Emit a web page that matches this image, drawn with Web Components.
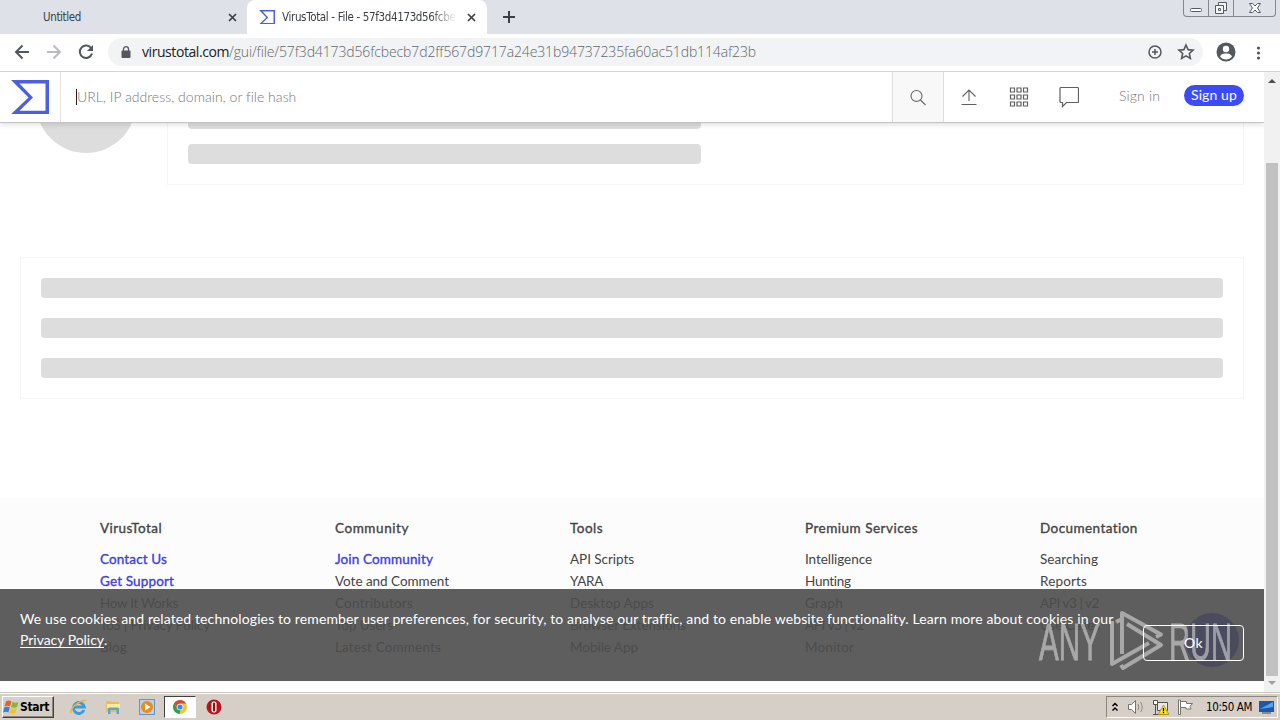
<!DOCTYPE html>
<html lang="en">
<head>
<meta charset="utf-8">
<title>VirusTotal</title>
<style>
  body {
    margin: 0;
    overflow: hidden;
  }
</style>
</head>
<body>
<desktop-screen></desktop-screen>
<script>
const attach = ( host, html ) => {
  const template = document.createElement( 'template' );
  template.innerHTML = html;

  const shadowRoot = host.attachShadow( {mode: 'open'} );
  shadowRoot.appendChild( template.content.cloneNode( true ) );
  return shadowRoot;
};

// Single line label, tracked so that it fills the given width
class FitText extends HTMLElement {
  constructor() {
    super();
    attach( this, `
      <style>
        :host {
          display: inline-block;
          flex: none;
          white-space: nowrap;
        }
      </style>
      <slot></slot>
    ` );
  }

  connectedCallback() {
    const width = parseFloat( this.getAttribute( 'width' ) );
    const count = this.textContent.length;

    // Measured as max-content, a stretched box would report its parent's width
    this.style.width = 'max-content';
    const natural = this.getBoundingClientRect().width;

    if( width && natural ) {
      this.style.letterSpacing = `${( width - natural ) / count}px`;
    }
  }
}

class BrowserTab extends HTMLElement {
  constructor() {
    super();
    attach( this, `
      <style>
        :host {
          align-items: center;
          box-sizing: border-box;
          color: #3c4043;
          display: flex;
          font: 11.500px/14px 'DejaVu Sans Condensed', 'DejaVu Sans', sans-serif;
          height: 34px;
          padding: 0 10px 0 12px;
          width: 247px;
        }

        :host( [active] ) {
          background: #ffffff;
          border-radius: 8px 8px 0 0;
          width: 240px;
        }

        span {
          flex: 1;
          margin-left: 31px;
          overflow: hidden;
          white-space: nowrap;
        }

        :host( [active] ) span {
          flex: none;
          margin: 0 10px 0 7px;
          width: 175px;
          -webkit-mask-image: linear-gradient( to right, #000 85%, transparent );
        }

        svg {
          display: block;
        }
      </style>
      <slot name="icon"></slot>
      <span><slot></slot></span>
      <svg width="9" height="9" viewBox="0 0 9 9"><path d="M1 1l7 7M8 1l-7 7" stroke="#3c4043" stroke-width="1.700"/></svg>
    ` );
  }
}

class WindowControls extends HTMLElement {
  constructor() {
    super();
    attach( this, `
      <style>
        :host {
          align-self: flex-start;
          border: 1px solid #83878f;
          border-radius: 0 0 4px 4px;
          border-top: 0;
          box-sizing: border-box;
          display: flex;
          height: 17px;
          margin-left: auto;
          margin-right: 4px;
          width: 93px;
        }

        div {
          border-right: 1px solid #83878f;
          display: flex;
          justify-content: center;
          width: 24px;
        }

        div:last-child {
          border: 0;
          flex: 1;
        }
      </style>
      <div><svg width="24" height="16"><rect x="6.500" y="8.500" width="11" height="3" rx="1" fill="#fff" stroke="#555a63"/></svg></div>
      <div><svg width="24" height="16" fill="#f4f5f7" stroke="#555a63"><path d="M9.500 2.500h8v8h-8z"/><path d="M6.500 5.500h8v8h-8z"/><path d="M9.500 8.500h2v2h-2z"/></svg></div>
      <div><svg width="24" height="16"><path d="M6.500 3.500h3l2.500 2.500 2.500-2.500h3l-3 4.500 3 4.500h-3l-2.500-2.500-2.500 2.500h-3l3-4.500z" fill="#fff" stroke="#555a63"/></svg></div>
    ` );
  }
}

class TabStrip extends HTMLElement {
  constructor() {
    super();
    attach( this, `
      <style>
        :host {
          background: #dee1e8;
          display: flex;
          height: 34px;
        }

        .plus {
          align-self: center;
          margin-left: 16px;
        }
      </style>
      <browser-tab><fit-text width="38">Untitled</fit-text></browser-tab>
      <browser-tab active>
        <vt-logo slot="icon" style="--size: 16px"></vt-logo>
        <fit-text width="185">VirusTotal - File - 57f3d4173d56fcbecb</fit-text>
      </browser-tab>
      <svg class="plus" width="12" height="12"><path d="M6 0v12M0 6h12" stroke="#3c4043" stroke-width="2"/></svg>
      <window-controls></window-controls>
    ` );
  }
}

class VtLogo extends HTMLElement {
  constructor() {
    super();
    attach( this, `
      <style>
        :host {
          display: block;
          height: calc( var( --size ) * .9 );
          width: var( --size );
        }

        svg {
          display: block;
          height: 100%;
          width: 100%;
        }
      </style>
      <svg viewBox="0 0 38 34" preserveAspectRatio="none"><path fill="#4b5fe6" fill-rule="evenodd" d="M0 0H38V34H0L17.500 17.500zM8.500 3.500L22 17.500L8.500 30.500H34.500V3.500z"/></svg>
    ` );
  }
}

class AddressBar extends HTMLElement {
  constructor() {
    super();
    attach( this, `
      <style>
        :host {
          align-items: center;
          background: #ffffff;
          border-bottom: 1px solid #d4d5d7;
          box-sizing: border-box;
          display: flex;
          height: 38px;
          padding: 0 12px 0 14px;
        }

        svg {
          display: block;
          flex: none;
        }

        .nav {
          display: flex;
          gap: 16px;
          margin-top: -2px;
        }

        .field {
          align-items: center;
          background: #f1f3f4;
          border-radius: 14px;
          box-sizing: border-box;
          color: #63676b;
          display: flex;
          font: 300 14px/20px 'Open Sans', sans-serif;
          height: 28px;
          margin-left: 14px;
          margin-top: -1px;
          padding: 0 10px 0 13px;
          width: 1095px;
        }

        .field b {
          color: #202124;
          font-weight: 400;
        }

        .lock {
          margin-right: 11px;
        }

        .zoom {
          margin: 0 16px 0 auto;
        }

        .user {
          margin: -2px 0 0 13px;
        }

        .more {
          margin-left: auto;
        }
      </style>
      <div class="nav">
        <svg width="16" height="16" fill="none" stroke="#54585c" stroke-width="2"><path d="M15 8H2M8.500 1.500L2 8l6.500 6.500"/></svg>
        <svg width="16" height="16" fill="none" stroke="#b9bbbe" stroke-width="2"><path d="M1 8h13M7.500 1.500L14 8l-6.500 6.500"/></svg>
        <svg width="16" height="16" fill="none" stroke="#54585c" stroke-width="2"><path d="M13.300 4.500A6.200 6.200 0 1 0 14 9.500"/><path d="M15 1v6H9z" fill="#54585c" stroke="none"/></svg>
      </div>
      <div class="field">
        <svg class="lock" width="10" height="12"><rect x="0.500" y="4.500" width="9" height="7.500" rx="1" fill="#54585c"/><path d="M2.500 5V3.200a2.500 2.500 0 0 1 5 0V5" fill="none" stroke="#54585c" stroke-width="1.300"/></svg>
        <b><fit-text width="87">virustotal.com</fit-text></b><fit-text width="527">/gui/file/57f3d4173d56fcbecb7d2ff567d9717a24e31b94737235fa60ac51db114af23b</fit-text>
        <svg class="zoom" width="14" height="14" fill="none" stroke="#54585c" stroke-width="1.500"><circle cx="7" cy="7" r="6"/><path d="M7 4v6M4 7h6"/></svg>
        <svg width="18" height="18" viewBox="0 0 16 16" style="margin: 0 -2px 0 -1px" fill="none" stroke="#54585c" stroke-width="1.400"><path d="M8 1.800l1.850 4.100 4.450.45-3.350 3 .95 4.400L8 11.500l-3.900 2.250.95-4.400-3.350-3 4.450-.45z"/></svg>
      </div>
      <svg class="user" width="20" height="20"><circle cx="10" cy="10" r="9.500" fill="#54585c"/><circle cx="10" cy="7" r="3.200" fill="#fff"/><path d="M4 14.500c1-2.500 3.500-3 6-3s5 .5 6 3a7.500 7.500 0 0 1-12 0z" fill="#fff"/></svg>
      <svg class="more" width="20" height="16" fill="#54585c"><circle cx="10.500" cy="3" r="1.600"/><circle cx="10.500" cy="8" r="1.600"/><circle cx="10.500" cy="13" r="1.600"/></svg>
    ` );
  }
}

class VtHeader extends HTMLElement {
  constructor() {
    super();
    attach( this, `
      <style>
        :host {
          background: #ffffff;
          border-bottom: 1px solid #c4c4c4;
          box-shadow: 0 2px 5px rgba( 0, 0, 0, .12 );
          color: #777777;
          display: flex;
          font: 300 14px/20px Lato, sans-serif;
          height: 50px;
        }

        .logo {
          border-right: 1px solid #e4e4dc;
          box-sizing: border-box;
          padding: 8px 11px;
          width: 61px;
        }

        .query {
          align-items: center;
          display: flex;
          flex: 1;
          padding-left: 15px;
        }

        .caret {
          background: #222222;
          height: 16px;
          width: 1px;
        }

        .search {
          align-items: center;
          background: #f8f8f8;
          border: solid #dedede;
          border-width: 0 1px;
          box-sizing: border-box;
          display: flex;
          justify-content: center;
          width: 52px;
        }

        .actions {
          align-items: center;
          display: flex;
          width: 320px;
        }

        .actions svg {
          flex: none;
          margin-left: 15px;
          margin-right: 15px;
        }

        .signin {
          margin: -3px 24px 0 25px;
        }

        .signup {
          background: #3b4bfa;
          border-radius: 11px;
          box-sizing: border-box;
          color: #ffffff;
          font-weight: 400;
          height: 21px;
          margin-top: -3px;
          padding-left: 7px;
          width: 60px;
        }
      </style>
      <div class="logo"><vt-logo style="--size: 38px"></vt-logo></div>
      <div class="query"><div class="caret"></div><fit-text width="219">URL, IP address, domain, or file hash</fit-text></div>
      <div class="search"><svg width="18" height="18" fill="none" stroke="#666" stroke-width="1.100"><circle cx="7.500" cy="8" r="5.500"/><path d="M11.500 12l5 5"/></svg></div>
      <div class="actions">
        <svg width="20" height="20" fill="none" stroke="#606060" stroke-width="1.100"><path d="M10 14V3.500M3.500 9.500L10 3l6.500 6.500M2.500 17.500h15"/></svg>
        <svg width="20" height="20" fill="none" stroke="#606060" stroke-width="1.200"><path d="M1.500 1h4v4h-4zM8 1h4v4h-4zM14.500 1h4v4h-4zM1.500 8h4v4h-4zM8 8h4v4h-4zM14.500 8h4v4h-4zM1.500 15h4v4h-4zM8 15h4v4h-4zM14.500 15h4v4h-4z"/></svg>
        <svg width="20" height="22" fill="none" stroke="#606060" stroke-width="1.200"><path d="M2 1.500h16.500a1 1 0 0 1 1 1v13a1 1 0 0 1-1 1H7.500L3.500 20.500V16.500H2a1 1 0 0 1-1-1V2.500a1 1 0 0 1 1-1z"/></svg>
        <fit-text class="signin" width="41">Sign in</fit-text>
        <div class="signup"><fit-text width="46">Sign up</fit-text></div>
      </div>
    ` );
  }
}

class SkeletonCard extends HTMLElement {
  constructor() {
    super();
    const root = attach( this, `
      <style>
        :host {
          border: 1px solid #f5f5f5;
          box-sizing: border-box;
          display: flex;
          flex-direction: column;
          gap: 20px;
          padding: 20px;
        }

        div {
          background: #dddddd;
          border-radius: 4px;
          height: 20px;
        }
      </style>
    ` );

    for( let r = 0; r < parseInt( this.getAttribute( 'rows' ) ); r++ ) {
      root.appendChild( document.createElement( 'div' ) );
    }
  }
}

class LinkColumn extends HTMLElement {
  constructor() {
    super();
    attach( this, `
      <style>
        :host {
          align-items: flex-start;
          color: #444444;
          display: flex;
          flex: none;
          flex-direction: column;
          font: 13.500px/22px Lato, sans-serif;
          width: 235px;
        }

        div {
          -webkit-text-stroke: .35px #444444;
          margin-bottom: 9px;
        }
      </style>
      <div><slot name="title"></slot></div>
      <slot></slot>
    ` );
  }
}

class VtFooter extends HTMLElement {
  constructor() {
    super();

    // [label, width in pixels], the column title comes first
    this._columns = [
      [['VirusTotal', 62], ['Contact Us', 67], ['Get Support', 74], ['How It Works', 78], ['ToS | Privacy Policy', 110], ['Blog', 27]],
      [['Community', 74], ['Join Community', 98], ['Vote and Comment', 114], ['Contributors', 78], ['Top Users', 58], ['Latest Comments', 106]],
      [['Tools', 33], ['API Scripts', 64], ['YARA', 33], ['Desktop Apps', 84], ['Browser Extensions', 116], ['Mobile App', 68]],
      [['Premium Services', 113], ['Intelligence', 67], ['Hunting', 46], ['Graph', 38], ['API v3 | v2', 59], ['Monitor', 49]],
      [['Documentation', 98], ['Searching', 58], ['Reports', 47], ['API v3 | v2', 59], ['Use Cases', 60]]
    ];

    const columns = this._columns.map( ( column, c ) => `
      <link-column>${column.map( ( item, i ) => {
        const lead = ( c === 0 && ( i === 1 || i === 2 ) ) || ( c === 1 && i === 1 );
        return `<fit-text width="${item[1]}"${i === 0 ? ' slot="title"' : ''}${lead ? ' class="lead"' : ''}>${item[0]}</fit-text>`;
      } ).join( '' )}</link-column>` ).join( '' );

    attach( this, `
      <style>
        :host {
          background: #fcfcfc;
          box-sizing: border-box;
          display: flex;
          height: 184px;
          overflow: hidden;
          padding: 19px 0 0 100px;
        }

        .lead {
          -webkit-text-stroke: .35px #3b40e8;
          color: #3b40e8;
        }
      </style>
      ${columns}
    ` );
  }
}

class CookieBar extends HTMLElement {
  constructor() {
    super();
    attach( this, `
      <style>
        :host {
          align-items: center;
          background: rgba( 76, 76, 76, .9 );
          box-sizing: border-box;
          color: #ffffff;
          display: flex;
          font: 14px/21px Lato, sans-serif;
          height: 92px;
          justify-content: space-between;
          padding: 0 20px;
        }

        p {
          display: flex;
          flex-direction: column;
          margin: -12px 0 0;
        }

        .policy {
          text-decoration: underline;
          text-underline-offset: 2px;
        }

        .ok {
          align-items: center;
          border: 1px solid #ffffff;
          border-radius: 4px;
          box-sizing: border-box;
          display: flex;
          height: 36px;
          justify-content: center;
          margin-top: 16px;
          padding-bottom: 2px;
          width: 101px;
        }
      </style>
      <p>
        <fit-text width="1093">We use cookies and related technologies to remember user preferences, for security, to analyse our traffic, and to enable website functionality. Learn more about cookies in our</fit-text>
        <span><fit-text class="policy" width="84">Privacy Policy</fit-text>.</span>
      </p>
      <div class="ok"><fit-text width="19">Ok</fit-text></div>
    ` );
  }
}

class AnyRunMark extends HTMLElement {
  constructor() {
    super();
    attach( this, `
      <style>
        :host {
          display: block;
          height: 64px;
          opacity: .46;
          width: 200px;
        }

        text {
          fill: #ffffff;
          font: 400 52px 'Liberation Sans Narrow', 'Liberation Sans', sans-serif;
          stroke: #ffffff;
          stroke-width: .8px;
        }
      </style>
      <svg width="200" height="64">
        <text x="2" y="51.500" textLength="61" lengthAdjust="spacingAndGlyphs">ANY</text>
        <text x="132" y="51.500" textLength="63" lengthAdjust="spacingAndGlyphs">RUN</text>
        <path d="M75 13V56L112 35M79 14L85 11M85 46V5L124 26.500L119 29M90 16L124 37L86 60L84 57" fill="none" stroke="#fff" stroke-width="4" stroke-linejoin="round"/>
      </svg>
    ` );
  }
}

class PageScrollbar extends HTMLElement {
  constructor() {
    super();
    attach( this, `
      <style>
        :host {
          align-items: center;
          background: #f1f1f1;
          display: flex;
          flex-direction: column;
          justify-content: space-between;
          width: 16px;
        }

        svg {
          display: block;
        }

        div {
          background: #c1c1c1;
          height: 513px;
          margin-top: 74px;
          width: 12px;
        }
      </style>
      <svg width="16" height="17"><path d="M4 11l4-4 4 4z" fill="#505050"/></svg>
      <div></div>
      <svg width="16" height="16"><path d="M4 5h8l-4 4z" fill="#a0a0a0"/></svg>
    ` );
  }
}

class VtPage extends HTMLElement {
  constructor() {
    super();
    attach( this, `
      <style>
        :host {
          background: #ffffff;
          display: flex;
          flex: 1;
          overflow: hidden;
        }

        .view {
          flex: 1;
          overflow: hidden;
          position: relative;
        }

        .content {
          display: flex;
          flex-direction: column;
          margin-top: -20px;
        }

        .summary {
          display: flex;
          height: 133px;
          margin: 0 20px 72px 36px;
        }

        .score {
          background: #dddddd;
          border-radius: 50%;
          height: 100px;
          margin: 1px 31px 0 0;
          width: 100px;
        }

        .summary skeleton-card {
          flex: 1;
          gap: 15px;
          justify-content: flex-end;
          padding-right: 542px;
        }

        .details {
          height: 142px;
          margin: 0 20px 99px;
        }

        vt-header,
        .chat,
        cookie-bar,
        any-run-mark {
          left: 0;
          position: absolute;
          right: 0;
          top: 0;
        }

        .chat {
          background: #3b4bfa;
          border-radius: 50%;
          height: 54px;
          left: 1185px;
          top: 541px;
          width: 54px;
        }

        cookie-bar {
          top: 517px;
        }

        any-run-mark {
          left: 1037px;
          top: 536px;
        }
      </style>
      <div class="view">
        <div class="content">
          <div class="summary">
            <div class="score"></div>
            <skeleton-card rows="2"></skeleton-card>
          </div>
          <skeleton-card class="details" rows="3"></skeleton-card>
          <vt-footer></vt-footer>
        </div>
        <vt-header></vt-header>
        <div class="chat"></div>
        <cookie-bar></cookie-bar>
        <any-run-mark></any-run-mark>
      </div>
      <page-scrollbar></page-scrollbar>
    ` );
  }
}

class TaskBar extends HTMLElement {
  constructor() {
    super();
    attach( this, `
      <style>
        :host {
          align-items: center;
          background: #d6cfc8;
          border-top: 1px solid #c9c6be;
          box-shadow: inset 0 1px #ffffff;
          box-sizing: border-box;
          color: #000000;
          display: flex;
          font: 11.500px/14px 'DejaVu Sans Condensed', 'DejaVu Sans', sans-serif;
          height: 28px;
          padding: 1px 2px 0;
        }

        svg {
          display: block;
          flex: none;
        }

        .start {
          align-items: center;
          border: 1px solid;
          border-color: #ffffff #404040 #404040 #ffffff;
          box-shadow: inset -1px -1px #8c8880;
          box-sizing: border-box;
          display: flex;
          font-size: 12px;
          font-weight: 700;
          height: 22px;
          width: 52px;
        }

        .apps {
          align-items: center;
          display: flex;
          margin-left: 16px;
        }

        .app {
          align-items: center;
          box-sizing: border-box;
          display: flex;
          height: 22px;
          justify-content: center;
          width: 34px;
        }

        .app:first-child {
          margin-right: 9px;
          width: 17px;
        }

        .app.open {
          background: #ffffff;
          border: 1px solid;
          border-color: #404040 #ffffff #ffffff #404040;
          margin-right: 1px;
          width: 32px;
        }

        .tray {
          align-items: center;
          border: 1px solid;
          border-color: #8c8880 #ffffff #ffffff #8c8880;
          box-sizing: border-box;
          display: flex;
          height: 22px;
          gap: 7px;
          margin-left: auto;
          padding-left: 4px;
          width: 172px;
        }

        .tray fit-text {
          margin-left: 5px;
        }
      </style>
      <div class="start">
        <svg width="17" height="16" viewBox="0 0 17 16"><path d="M3 2.500c2-1.500 4-1 5.500 0L7 7.500c-2-1-3.500-1-5.500 0z" fill="#e8602c"/><path d="M9.500 3c2 1 4 1 6 0L14 8c-2 1-4 .8-6 0z" fill="#7fb83a"/><path d="M1.200 8.500c2-1.200 4-.8 5.600 0L5.300 13.500c-1.800-1-3.700-.8-5.300.2z" fill="#3b7fd4"/><path d="M7.800 9c2 1 4 1 6 0l-1.500 5c-2 1-4 .8-6 0z" fill="#f5c02e"/></svg>
        <fit-text width="29">Start</fit-text>
      </div>
      <div class="apps">
        <div class="app"><svg width="17" height="17" viewBox="0 0 17 17" fill="none"><path d="M14 11a5.500 5.500 0 1 1 .3-3H4" stroke="#3a9be0" stroke-width="2.800"/><path d="M1 14C-.5 10 9 1 15.500 1.500" stroke="#e8b930" stroke-width="1.500"/></svg></div>
        <div class="app"><svg width="16" height="16" viewBox="0 0 16 16"><path d="M1 2h5l1 1h7v10H1z" fill="#e2c05c"/><path d="M2 5h13v4H2z" fill="#f8eaa2"/><path d="M3 15V10q0-1.500 1.500-1.500h8Q14 8.500 14 10v5h-2.500v-4h-6v4z" fill="#5aa6d2"/></svg></div>
        <div class="app"><svg width="16" height="16"><rect x=".5" y=".5" width="15" height="15" fill="#b4d2ec" stroke="#6494c4"/><circle cx="8" cy="8" r="6" fill="#ef8a18"/><path d="M6 4.500v7l5.500-3.500z" fill="#fff"/></svg></div>
        <div class="app open"><svg width="14" height="14" viewBox="0 0 14 14"><circle cx="7" cy="7" r="7" fill="#f5c52c"/><path d="M1 3.500A7 7 0 0 1 13.100 3.500H7L5 9z" fill="#dc4437"/><path d="M1 3.500L5 9 7.500 9.500 6.500 14A7 7 0 0 1 1 3.500z" fill="#2ba053"/><circle cx="7" cy="7" r="3.300" fill="#fff"/><circle cx="7" cy="7" r="2.600" fill="#4285f4"/></svg></div>
        <div class="app"><svg width="16" height="16"><circle cx="8" cy="8" r="7.500" fill="#b8141c"/><rect x="5.500" y="2.500" width="5" height="11" rx="2" fill="#fff"/><rect x="6.900" y="3.500" width="2.200" height="9" rx="1" fill="#8e1016"/></svg></div>
      </div>
      <div class="tray">
        <svg width="9" height="12" fill="none" stroke="#000" stroke-width="1.500"><path d="M1.500 5l2.500-2.500L6.500 5M1.500 9.500L4 7l2.500 2.500"/></svg>
        <svg width="18" height="16"><path d="M1.500 5.500h3l4-4v13l-4-4h-3z" fill="#fff" stroke="#77736c"/><path d="M11 5q2 3 0 6M13.500 3q3.500 5 0 10" fill="none" stroke="#8c8880"/></svg>
        <svg width="18" height="16"><path d="M5.500 3.500h10v8h-10z" fill="#e8e8e8" stroke="#55524d"/><path d="M1.500 1.500h4v4h-4zM3.500 5.500v10M1 15.500h8" fill="#fff" stroke="#55524d"/><path d="M11.500 6l5.500 9.500H6z" fill="#f8d820" stroke="#a88a10" stroke-width=".8"/><path d="M11.500 9v3.200M11.500 13v1.200" stroke="#000" stroke-width="1.200"/></svg>
        <svg width="17" height="16"><path d="M1.500 1v14.500h2V1z" fill="#fff" stroke="#77736c"/><path d="M3.500 2.500h6v2h6l-2.500 3 1 2.500h-5v-1.500H3.500z" fill="#fff" stroke="#77736c"/></svg>
        <fit-text width="46">10:50 AM</fit-text>
        <svg width="15" height="14"><rect y="1" width="15" height="11" fill="#1c58a8"/><path d="M1 9L14 2v5z" fill="#5aa2e8"/><path d="M3 13h9" stroke="#444"/></svg>
      </div>
    ` );
  }
}

class DesktopScreen extends HTMLElement {
  constructor() {
    super();
    attach( this, `
      <style>
        :host {
          display: flex;
          flex-direction: column;
          height: 720px;
          overflow: hidden;
          width: 1280px;
        }
      </style>
      <tab-strip></tab-strip>
      <address-bar></address-bar>
      <vt-page></vt-page>
      <task-bar></task-bar>
    ` );
  }
}

window.customElements.define( 'fit-text', FitText );
window.customElements.define( 'vt-logo', VtLogo );
window.customElements.define( 'browser-tab', BrowserTab );
window.customElements.define( 'window-controls', WindowControls );
window.customElements.define( 'tab-strip', TabStrip );
window.customElements.define( 'address-bar', AddressBar );
window.customElements.define( 'vt-header', VtHeader );
window.customElements.define( 'skeleton-card', SkeletonCard );
window.customElements.define( 'link-column', LinkColumn );
window.customElements.define( 'vt-footer', VtFooter );
window.customElements.define( 'cookie-bar', CookieBar );
window.customElements.define( 'any-run-mark', AnyRunMark );
window.customElements.define( 'page-scrollbar', PageScrollbar );
window.customElements.define( 'vt-page', VtPage );
window.customElements.define( 'task-bar', TaskBar );
window.customElements.define( 'desktop-screen', DesktopScreen );
</script>
</body>
</html>
